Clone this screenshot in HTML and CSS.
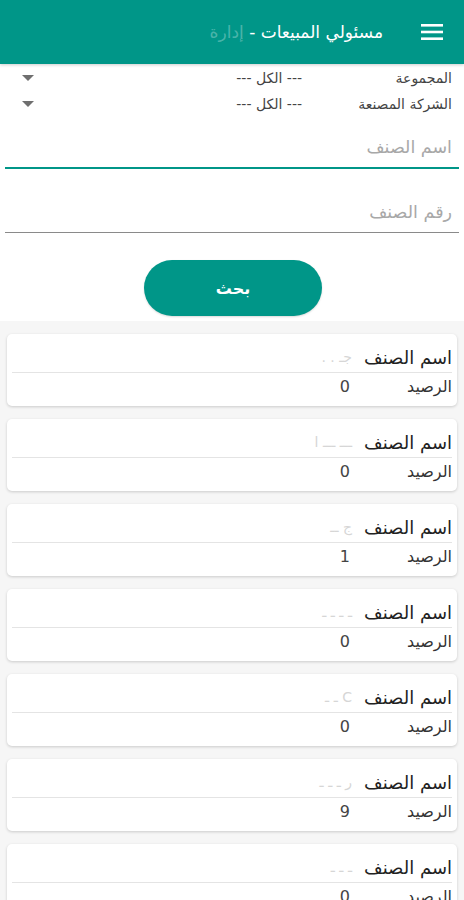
FILE: index.html
```html
<!DOCTYPE html>
<html lang="ar" dir="rtl">
<head>
  <meta charset="UTF-8">
  <title>مسئولي المبيعات</title>
  <meta name="viewport" content="width=device-width, initial-scale=1.0">
  <link rel="stylesheet" href="styles.css">
</head>
<body>
  <header class="topbar">
    <button class="menu-btn" aria-label="menu">
      <svg width="22" height="16" viewBox="0 0 22 16"><rect y="0" width="22" height="2.6" fill="#fff"/><rect y="6.7" width="22" height="2.6" fill="#fff"/><rect y="13.4" width="22" height="2.6" fill="#fff"/></svg>
    </button>
    <h1>مسئولي المبيعات - <span class="blur">إدارة</span></h1>
  </header>

  <section class="filters">
    <div class="filter-row">
      <span class="filter-label">المجموعة</span>
      <span class="filter-value">--- الكل ---</span>
      <span class="caret"></span>
    </div>
    <div class="filter-row">
      <span class="filter-label">الشركة المصنعة</span>
      <span class="filter-value">--- الكل ---</span>
      <span class="caret"></span>
    </div>
  </section>

  <div class="field active"><input placeholder="اسم الصنف"></div>
  <div class="field"><input placeholder="رقم الصنف"></div>

  <div class="actions">
    <button class="search-btn">بحث</button>
  </div>

  <main class="results">
    <div class="card">
      <span class="lbl name-lbl">اسم الصنف</span><span class="name">جـ . .</span>
      <span class="lbl">الرصيد</span><span class="qty">0</span>
    </div>
    <div class="card">
      <span class="lbl name-lbl">اسم الصنف</span><span class="name">ـــ ـــ ا</span>
      <span class="lbl">الرصيد</span><span class="qty">0</span>
    </div>
    <div class="card">
      <span class="lbl name-lbl">اسم الصنف</span><span class="name">ج ــ</span>
      <span class="lbl">الرصيد</span><span class="qty">1</span>
    </div>
    <div class="card">
      <span class="lbl name-lbl">اسم الصنف</span><span class="name">ـ ـ ـ ـ</span>
      <span class="lbl">الرصيد</span><span class="qty">0</span>
    </div>
    <div class="card">
      <span class="lbl name-lbl">اسم الصنف</span><span class="name">C ـ ـ</span>
      <span class="lbl">الرصيد</span><span class="qty">0</span>
    </div>
    <div class="card">
      <span class="lbl name-lbl">اسم الصنف</span><span class="name">ر ـ ـ ـ</span>
      <span class="lbl">الرصيد</span><span class="qty">9</span>
    </div>
    <div class="card">
      <span class="lbl name-lbl">اسم الصنف</span><span class="name">ـ ـ ـ</span>
      <span class="lbl">الرصيد</span><span class="qty">0</span>
    </div>
  </main>
</body>
</html>
```

FILE: styles.css
```css
body {
  margin: 0;
  background: #fff;
  font-family: "DejaVu Sans", "Noto Sans", sans-serif;
  color: #333;
  overflow: hidden;
}
.topbar {
  background: #009688;
  height: 64px;
  display: flex;
  align-items: center;
  padding: 0 21px 0 0;
  box-shadow: 0 1px 3px rgba(0,0,0,0.2);
}
.menu-btn {
  background: none;
  border: none;
  padding: 0;
  width: 22px;
  height: 16px;
  display: flex;
}
.topbar h1 {
  margin: 0 38px 0 0;
  font-size: 17px;
  font-weight: normal;
  color: #fff;
}
.blur {
  color: rgba(255,255,255,0.3);
}
.filters {
  padding: 1px 12px 0 22px;
}
.filter-row {
  display: flex;
  align-items: center;
  height: 26px;
  font-size: 14px;
}
.filter-label {
  width: 150px;
  color: #444;
}
.filter-value {
  flex: 1;
  color: #444;
}
.caret {
  width: 0;
  height: 0;
  border-left: 6px solid transparent;
  border-right: 6px solid transparent;
  border-top: 6px solid #6f6f6f;
}
.field {
  margin: 12px 5px 0;
  border-bottom: 1px solid #8a8a8a;
}
.field.active {
  margin-top: 12px;
  border-bottom: 2px solid #009688;
}
.field + .field {
  margin-top: 25px;
}
.field input {
  width: 100%;
  box-sizing: border-box;
  border: none;
  outline: none;
  background: transparent;
  font-family: inherit;
  font-size: 17.5px;
  padding: 5px 7px 7px;
  height: 38px;
}
.field input::placeholder {
  color: #a8a8a8;
}
.actions {
  display: flex;
  justify-content: center;
  padding: 27px 0 5px;
}
.search-btn {
  background: #009688;
  color: #fff;
  border: none;
  border-radius: 28px;
  width: 178px;
  height: 56px;
  font-family: inherit;
  font-size: 16px;
  font-weight: 600;
  margin-left: 2px;
  box-shadow: 0 1px 2px rgba(0,0,0,0.15);
}
.results {
  background: #f6f6f6;
  padding: 13px 7px 0;
  display: flex;
  flex-direction: column;
  gap: 13px;
}
.card {
  background: #fff;
  border-radius: 5px;
  box-shadow: 0 1px 3px rgba(0,0,0,0.18);
  height: 72px;
  box-sizing: border-box;
  padding: 9px 5px 0 5px;
  display: grid;
  grid-template-columns: 97px 1fr;
  grid-template-rows: 29px 28px;
  align-items: center;
}
.lbl {
  font-size: 16px;
  color: #333;
}
.name-lbl {
  font-size: 18px;
  color: #222;
}
.card .name-lbl,
.card .name {
  border-bottom: 1px solid #e4e4e4;
  height: 29px;
  line-height: 29px;
}
.name {
  color: #d6d6d6;
  font-size: 14px;
  padding-right: 3px;
}
.qty {
  font-size: 16px;
  color: #444;
  padding-right: 5px;
}
```
